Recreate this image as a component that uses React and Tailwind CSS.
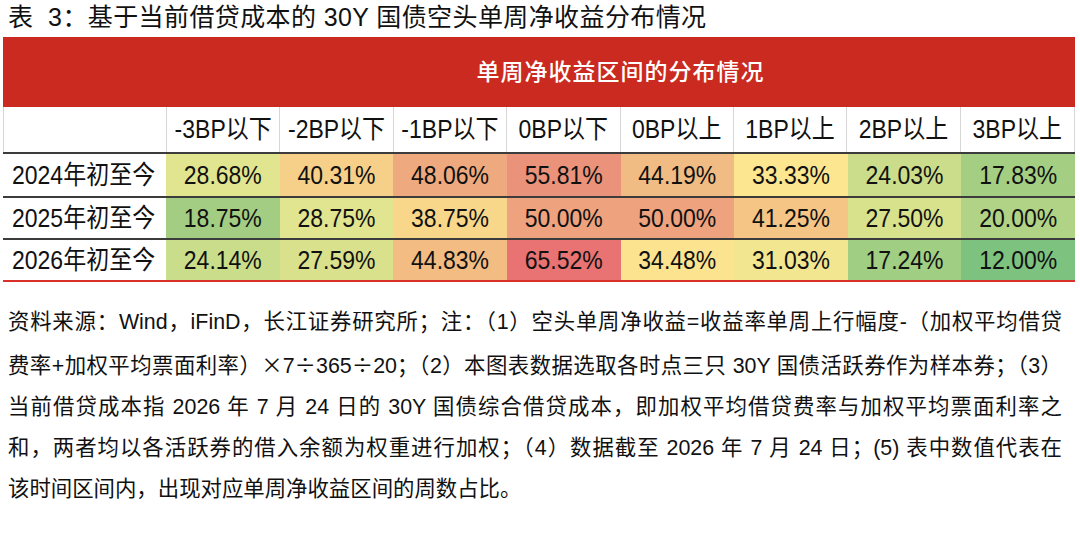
import React from "react";

const FONT = "font-['Liberation_Sans','Noto_Sans_CJK_SC',sans-serif]";
const CJK = "font-['Noto_Sans_CJK_SC',sans-serif]";

const headers = ["-3BP以下", "-2BP以下", "-1BP以下", "0BP以下", "0BP以上", "1BP以上", "2BP以上", "3BP以上"];

const rows = [
  {
    label: "2024年初至今",
    cells: [
      ["28.68%", "bg-[#e2e58f]"],
      ["40.31%", "bg-[#f6cf89]"],
      ["48.06%", "bg-[#eeaa7e]"],
      ["55.81%", "bg-[#ea927a]"],
      ["44.19%", "bg-[#f1bc83]"],
      ["33.33%", "bg-[#fce690]"],
      ["24.03%", "bg-[#cbdd8a]"],
      ["17.83%", "bg-[#a4cf83]"],
    ],
  },
  {
    label: "2025年初至今",
    cells: [
      ["18.75%", "bg-[#a2cd82]"],
      ["28.75%", "bg-[#e2e58f]"],
      ["38.75%", "bg-[#f8d68a]"],
      ["50.00%", "bg-[#eea27e]"],
      ["50.00%", "bg-[#eea27e]"],
      ["41.25%", "bg-[#f4c585]"],
      ["27.50%", "bg-[#d8e18c]"],
      ["20.00%", "bg-[#b0d385]"],
    ],
  },
  {
    label: "2026年初至今",
    cells: [
      ["24.14%", "bg-[#cadd8b]"],
      ["27.59%", "bg-[#d9e18d]"],
      ["44.83%", "bg-[#f2bc83]"],
      ["65.52%", "bg-[#e87372]"],
      ["34.48%", "bg-[#fbe38f]"],
      ["31.03%", "bg-[#f2e690]"],
      ["17.24%", "bg-[#a0ce83]"],
      ["12.00%", "bg-[#7dc27e]"],
    ],
  },
];

const Stretch = ({ children }) => (
  <span className="inline-block scale-y-[1.12]">{children}</span>
);

const Line = ({ children }) => (
  <div className="text-justify [text-align-last:justify] whitespace-nowrap">{children}</div>
);

export default function App() {
  return (
    <div className={`w-[1080px] h-[535px] bg-white text-[#111] ${FONT}`}>
      <div className="h-[37px] pl-2 text-[25px] leading-[35px] tracking-[0.4px] whitespace-nowrap">
        表&nbsp;&nbsp;3：基于当前借贷成本的 30Y 国债空头单周净收益分布情况
      </div>

      <div className="ml-[3px] w-[1072px]">
        {/* red banner */}
        <div className="grid grid-cols-[163px_1fr] h-[70px] bg-[#cb2a20]">
          <div />
          <div className="flex items-center justify-center text-white text-[23px] font-medium tracking-[1px]">
            单周净收益区间的分布情况
          </div>
        </div>

        {/* column labels */}
        <div className="grid grid-cols-[163px_repeat(8,1fr)] h-[45px] border-x border-[#d6d6d6]">
          <div className="border-r border-[#d6d6d6]" />
          {headers.map((h, i) => (
            <div
              key={h}
              className={`flex items-center justify-center text-[23px] ${i < 7 ? "border-r border-[#d6d6d6]" : ""}`}
            >
              <Stretch>{h}</Stretch>
            </div>
          ))}
        </div>

        {rows.map((row, ri) => (
          <div
            key={row.label}
            className={`grid grid-cols-[163px_repeat(8,1fr)] border-t-2 border-[#3c3c3c] ${ri === 0 ? "h-[44px]" : "h-[42px]"}`}
          >
            <div className="flex items-center pl-[9px] text-[23px]">
              <Stretch>{row.label}</Stretch>
            </div>
            {row.cells.map(([v, bg], ci) => (
              <div key={ci} className={`flex items-center justify-center text-[23px] ${bg}`}>
                <Stretch>{v}</Stretch>
              </div>
            ))}
          </div>
        ))}
        <div className="h-[2px] bg-[#d9302a]" />
      </div>

      <div className="mt-[20px] pl-2 pr-[18px] text-[21.4px] leading-[41px]">
        <Line>资料来源：Wind，iFinD，长江证券研究所；注：（1）空头单周净收益=收益率单周上行幅度-（加权平均借贷</Line>
        <Line>
          费率+加权平均票面利率）<span className={CJK}>×</span>7<span className={CJK}>÷</span>365
          <span className={CJK}>÷</span>20；（2）本图表数据选取各时点三只 30Y 国债活跃券作为样本券；（3）
        </Line>
        <Line>当前借贷成本指 2026 年 7 月 24 日的 30Y 国债综合借贷成本，即加权平均借贷费率与加权平均票面利率之</Line>
        <Line>和，两者均以各活跃券的借入余额为权重进行加权；（4）数据截至 2026 年 7 月 24 日；(5) 表中数值代表在</Line>
        <div>该时间区间内，出现对应单周净收益区间的周数占比。</div>
      </div>
    </div>
  );
}
